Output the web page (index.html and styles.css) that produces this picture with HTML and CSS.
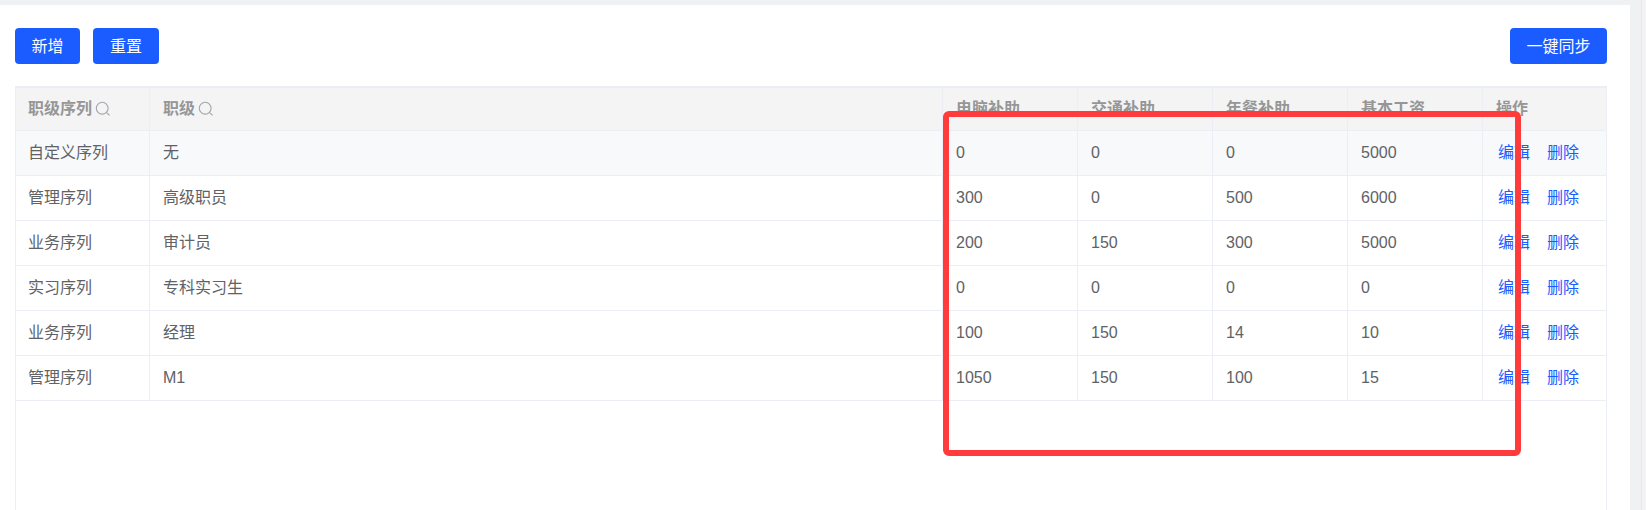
FILE: index.html
```html
<!DOCTYPE html>
<html lang="zh-CN">
<head>
<meta charset="utf-8">
<title>职级</title>
<link rel="stylesheet" href="styles.css">
</head>
<body>
<div class="page">
  <main class="panel">
    <div class="toolbar">
      <div class="group">
        <button class="btn btn-add">新增</button>
        <button class="btn btn-reset">重置</button>
      </div>
      <button class="btn btn-sync">一键同步</button>
    </div>
    <div class="table-wrap">
      <table class="table">
        <colgroup>
          <col class="c1"><col class="c2"><col class="c3"><col class="c4"><col class="c5"><col class="c6"><col class="c7">
        </colgroup>
        <thead>
          <tr>
            <th>职级序列<svg class="search" viewBox="0 0 16 16"><circle cx="7.2" cy="7.2" r="5.9"/><path d="M11.6 11.6 14.6 14.4"/></svg></th>
            <th>职级<svg class="search" viewBox="0 0 16 16"><circle cx="7.2" cy="7.2" r="5.9"/><path d="M11.6 11.6 14.6 14.4"/></svg></th>
            <th>电脑补助</th><th>交通补助</th><th>年餐补助</th><th>基本工资</th><th>操作</th>
          </tr>
        </thead>
        <tbody>
          <tr class="hover"><td class="zh">自定义序列</td><td class="zh">无</td><td>0</td><td>0</td><td>0</td><td>5000</td><td class="ops"><a>编辑</a><a>删除</a></td></tr>
          <tr><td class="zh">管理序列</td><td class="zh">高级职员</td><td>300</td><td>0</td><td>500</td><td>6000</td><td class="ops"><a>编辑</a><a>删除</a></td></tr>
          <tr><td class="zh">业务序列</td><td class="zh">审计员</td><td>200</td><td>150</td><td>300</td><td>5000</td><td class="ops"><a>编辑</a><a>删除</a></td></tr>
          <tr><td class="zh">实习序列</td><td class="zh">专科实习生</td><td>0</td><td>0</td><td>0</td><td>0</td><td class="ops"><a>编辑</a><a>删除</a></td></tr>
          <tr><td class="zh">业务序列</td><td class="zh">经理</td><td>100</td><td>150</td><td>14</td><td>10</td><td class="ops"><a>编辑</a><a>删除</a></td></tr>
          <tr><td class="zh">管理序列</td><td>M1</td><td>1050</td><td>150</td><td>100</td><td>15</td><td class="ops"><a>编辑</a><a>删除</a></td></tr>
        </tbody>
      </table>
    </div>
  </main>
  <div class="scroll-track"></div>
</div>
<div class="annotation"></div>
</body>
</html>
```
FILE: styles.css
```css
* { box-sizing: border-box; }
html, body { margin: 0; height: 510px; overflow: hidden; }
body {
  background: #f0f1f3;
  font-family: "Liberation Sans", "Noto Sans CJK SC", sans-serif;
  font-size: 16px;
  color: #606266;
}
.page { display: flex; height: 510px; padding-top: 5px; }
.panel { width: 1630px; background: #fff; padding: 23px 23px 0 15px; display: flex; flex-direction: column; }
.scroll-track { margin-left: 11px; margin-top: -5px; flex: 1; border-left: 1px solid #e6e6e8; background: #f2f2f4; }
.toolbar { display: flex; justify-content: space-between; height: 36px; margin-bottom: 22px; }
.group { display: flex; gap: 13px; }
.btn {
  height: 36px; border: 0; border-radius: 4px; background: #1a5cff; color: #fff;
  font: inherit; font-size: 16px; padding: 0 0 2px; cursor: pointer;
}
.btn-add { width: 65px; }
.btn-reset { width: 66px; }
.btn-sync { width: 97px; }
.table-wrap { flex: 1; border: 1px solid #ebeef5; border-top-width: 2px; border-bottom: 0; width: 1592px; }
.table { border-collapse: separate; border-spacing: 0; table-layout: fixed; width: 100%; }
.c1 { width: 134px; } .c2 { width: 793px; } .c3, .c4, .c5, .c6 { width: 135px; }
.table th, .table td { height: 45px; padding: 0 13px; text-align: left; border-right: 1px solid #ebeef5; border-bottom: 1px solid #ebeef5; font-weight: normal; white-space: nowrap; }
.table th:last-child, .table td:last-child { border-right: 0; }
.table th { height: 43px; padding-bottom: 5px; background: #f4f4f5; color: #969696; font-weight: bold; }
.table th:first-child, .table td:first-child { padding-left: 12px; }
.table td.zh { padding-bottom: 5px; }
.hover td { background: #f8f9fb; }
.search { width: 16px; height: 16px; margin-left: 3px; vertical-align: -3px; fill: none; stroke: #a4a6aa; stroke-width: 1.1; }
.ops { color: #1a5cff; }
.table td.ops { padding: 0 0 5px 15px; }
.ops a { margin-right: 17px; }
.annotation { position: absolute; left: 943px; top: 111px; width: 578px; height: 345px; border: 6px solid #ff3b3b; border-radius: 6px; }
```
